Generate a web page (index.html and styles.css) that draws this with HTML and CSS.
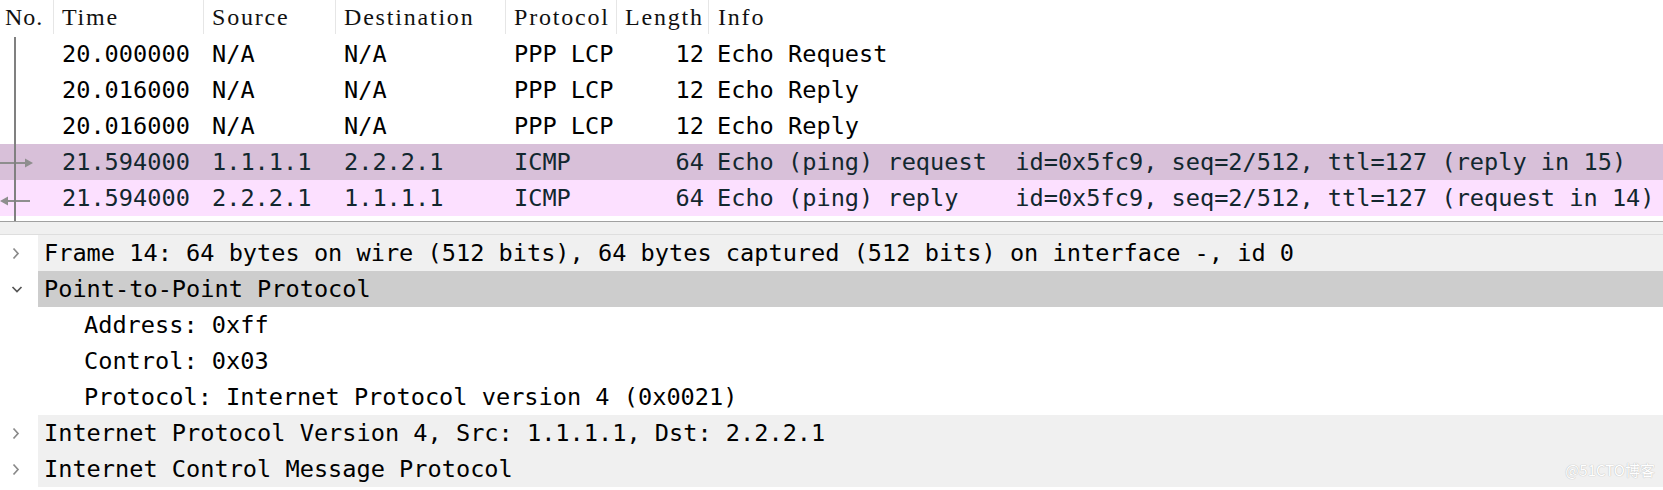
FILE: index.html
```html
<!DOCTYPE html>
<html>
<head>
<meta charset="utf-8">
<link rel="stylesheet" href="styles.css">
</head>
<body>
<div class="app">
  <div class="list">
    <div class="hdr">
      <div class="hc c-no">No.</div>
      <div class="hc">Time</div>
      <div class="hc">Source</div>
      <div class="hc">Destination</div>
      <div class="hc">Protocol</div>
      <div class="hc">Length</div>
      <div class="hc c-info">Info</div>
    </div>
    <div class="rows">
      <div class="row">
        <div class="c c-no"></div><div class="c">20.000000</div><div class="c">N/A</div><div class="c">N/A</div><div class="c">PPP LCP</div><div class="c c-len">12</div><div class="c c-info">Echo Request</div>
      </div>
      <div class="row">
        <div class="c c-no"></div><div class="c">20.016000</div><div class="c">N/A</div><div class="c">N/A</div><div class="c">PPP LCP</div><div class="c c-len">12</div><div class="c c-info">Echo Reply</div>
      </div>
      <div class="row">
        <div class="c c-no"></div><div class="c">20.016000</div><div class="c">N/A</div><div class="c">N/A</div><div class="c">PPP LCP</div><div class="c c-len">12</div><div class="c c-info">Echo Reply</div>
      </div>
      <div class="row row-sel">
        <div class="c c-no"><svg class="rel" width="54" height="36" viewBox="0 0 54 36"><line x1="0" y1="19" x2="29" y2="19" stroke="#8e8e8e" stroke-width="2"/><polygon points="33,19 25,14.5 25,23.5" fill="#8e8e8e"/></svg></div><div class="c">21.594000</div><div class="c">1.1.1.1</div><div class="c">2.2.2.1</div><div class="c">ICMP</div><div class="c c-len">64</div><div class="c c-info">Echo (ping) request  id=0x5fc9, seq=2/512, ttl=127 (reply in 15)</div>
      </div>
      <div class="row row-icmp">
        <div class="c c-no"><svg class="rel" width="54" height="36" viewBox="0 0 54 36"><line x1="4" y1="21" x2="30" y2="21" stroke="#8e8e8e" stroke-width="2"/><polygon points="0,21 8,16.5 8,25.5" fill="#8e8e8e"/></svg></div><div class="c">21.594000</div><div class="c">2.2.2.1</div><div class="c">1.1.1.1</div><div class="c">ICMP</div><div class="c c-len">64</div><div class="c c-info">Echo (ping) reply    id=0x5fc9, seq=2/512, ttl=127 (request in 14)</div>
      </div>
    </div>
    <div class="conv-line"></div>
  </div>
  <div class="splitter"></div>
  <div class="details">
    <div class="drow top">
      <svg class="exp" width="38" height="36" viewBox="0 0 38 36"><polyline points="13.5,13.5 18,18.5 13.5,23.5" fill="none" stroke="#8a8a8a" stroke-width="1.7"/></svg>
      <div class="dtext">Frame 14: 64 bytes on wire (512 bits), 64 bytes captured (512 bits) on interface -, id 0</div>
    </div>
    <div class="drow top sel">
      <svg class="exp" width="38" height="36" viewBox="0 0 38 36"><polyline points="12.5,16 17,20.5 21.5,16" fill="none" stroke="#555" stroke-width="1.7"/></svg>
      <div class="dtext">Point-to-Point Protocol</div>
    </div>
    <div class="drow child"><div class="dtext">Address: 0xff</div></div>
    <div class="drow child"><div class="dtext">Control: 0x03</div></div>
    <div class="drow child"><div class="dtext">Protocol: Internet Protocol version 4 (0x0021)</div></div>
    <div class="drow top">
      <svg class="exp" width="38" height="36" viewBox="0 0 38 36"><polyline points="13.5,13.5 18,18.5 13.5,23.5" fill="none" stroke="#8a8a8a" stroke-width="1.7"/></svg>
      <div class="dtext">Internet Protocol Version 4, Src: 1.1.1.1, Dst: 2.2.2.1</div>
    </div>
    <div class="drow top">
      <svg class="exp" width="38" height="36" viewBox="0 0 38 36"><polyline points="13.5,13.5 18,18.5 13.5,23.5" fill="none" stroke="#8a8a8a" stroke-width="1.7"/></svg>
      <div class="dtext">Internet Control Message Protocol</div>
    </div>
  </div>
  <div class="watermark">@51CTO博客</div>
</div>
</body>
</html>
```

FILE: styles.css
```css
* { box-sizing: border-box; }
html, body { margin: 0; padding: 0; background: #ffffff; }
.app {
  position: relative;
  width: 1663px;
  height: 490px;
  overflow: hidden;
  background: #ffffff;
  display: flex;
  flex-direction: column;
}
.list {
  position: relative;
  height: 222px;
  border-bottom: 1px solid #a0a0a0;
  background: #ffffff;
  flex: none;
}
.hdr, .row {
  display: grid;
  grid-template-columns: 54px 150px 132px 170px 111px 92px 1fr;
}
.hdr { height: 36px; }
.hc {
  font-family: "Liberation Serif", serif;
  font-size: 24px;
  letter-spacing: 1.8px;
  color: #111;
  line-height: 34px;
  height: 34px;
  padding-left: 8px;
  border-right: 1px solid #e6e6e6;
  white-space: nowrap;
  overflow: hidden;
}
.hc.c-no { padding-left: 5px; letter-spacing: 1px; }
.hc.c-info { border-right: none; padding-left: 9px; }
.row {
  height: 36px;
  font-family: "DejaVu Sans Mono", monospace;
  font-size: 23.6px;
  line-height: 36px;
  color: #000;
}
.row-sel { background: #d8c0d9; color: #12272e; }
.row-icmp { background: #fce0ff; color: #12272e; }
.c {
  padding-left: 8px;
  white-space: pre;
  overflow: hidden;
}
.c.c-no { padding-left: 0; position: relative; }
.c.c-len { text-align: right; padding-left: 0; padding-right: 5px; }
.c.c-info { padding-left: 8px; }
.rel { display: block; }
.conv-line {
  position: absolute;
  left: 14px;
  top: 37px;
  width: 2px;
  bottom: 0;
  background: #808080;
}
.splitter {
  height: 12px;
  background: #f0f0f0;
  flex: none;
}
.details {
  border-top: 1px solid #dedede;
  flex: 1;
  background: #ffffff;
}
.drow {
  height: 36px;
  display: flex;
  align-items: center;
  font-family: "DejaVu Sans Mono", monospace;
  font-size: 23.6px;
  line-height: 36px;
  color: #000;
}
.exp { flex: none; display: block; background: #ffffff; }
.drow.top .dtext {
  flex: 1;
  background: #f0f0f0;
  padding-left: 6px;
  white-space: pre;
}
.drow.top.sel .dtext { background: #cdcdcd; }
.drow.child .dtext { padding-left: 84px; white-space: pre; }
.watermark {
  position: absolute;
  right: 8px;
  bottom: 10px;
  font-family: "Noto Sans CJK SC", sans-serif;
  font-size: 15px;
  color: #ffffff;
  text-shadow: 0 0 1px #b8b8b8, 0 0 1px #c8c8c8;
}
```
